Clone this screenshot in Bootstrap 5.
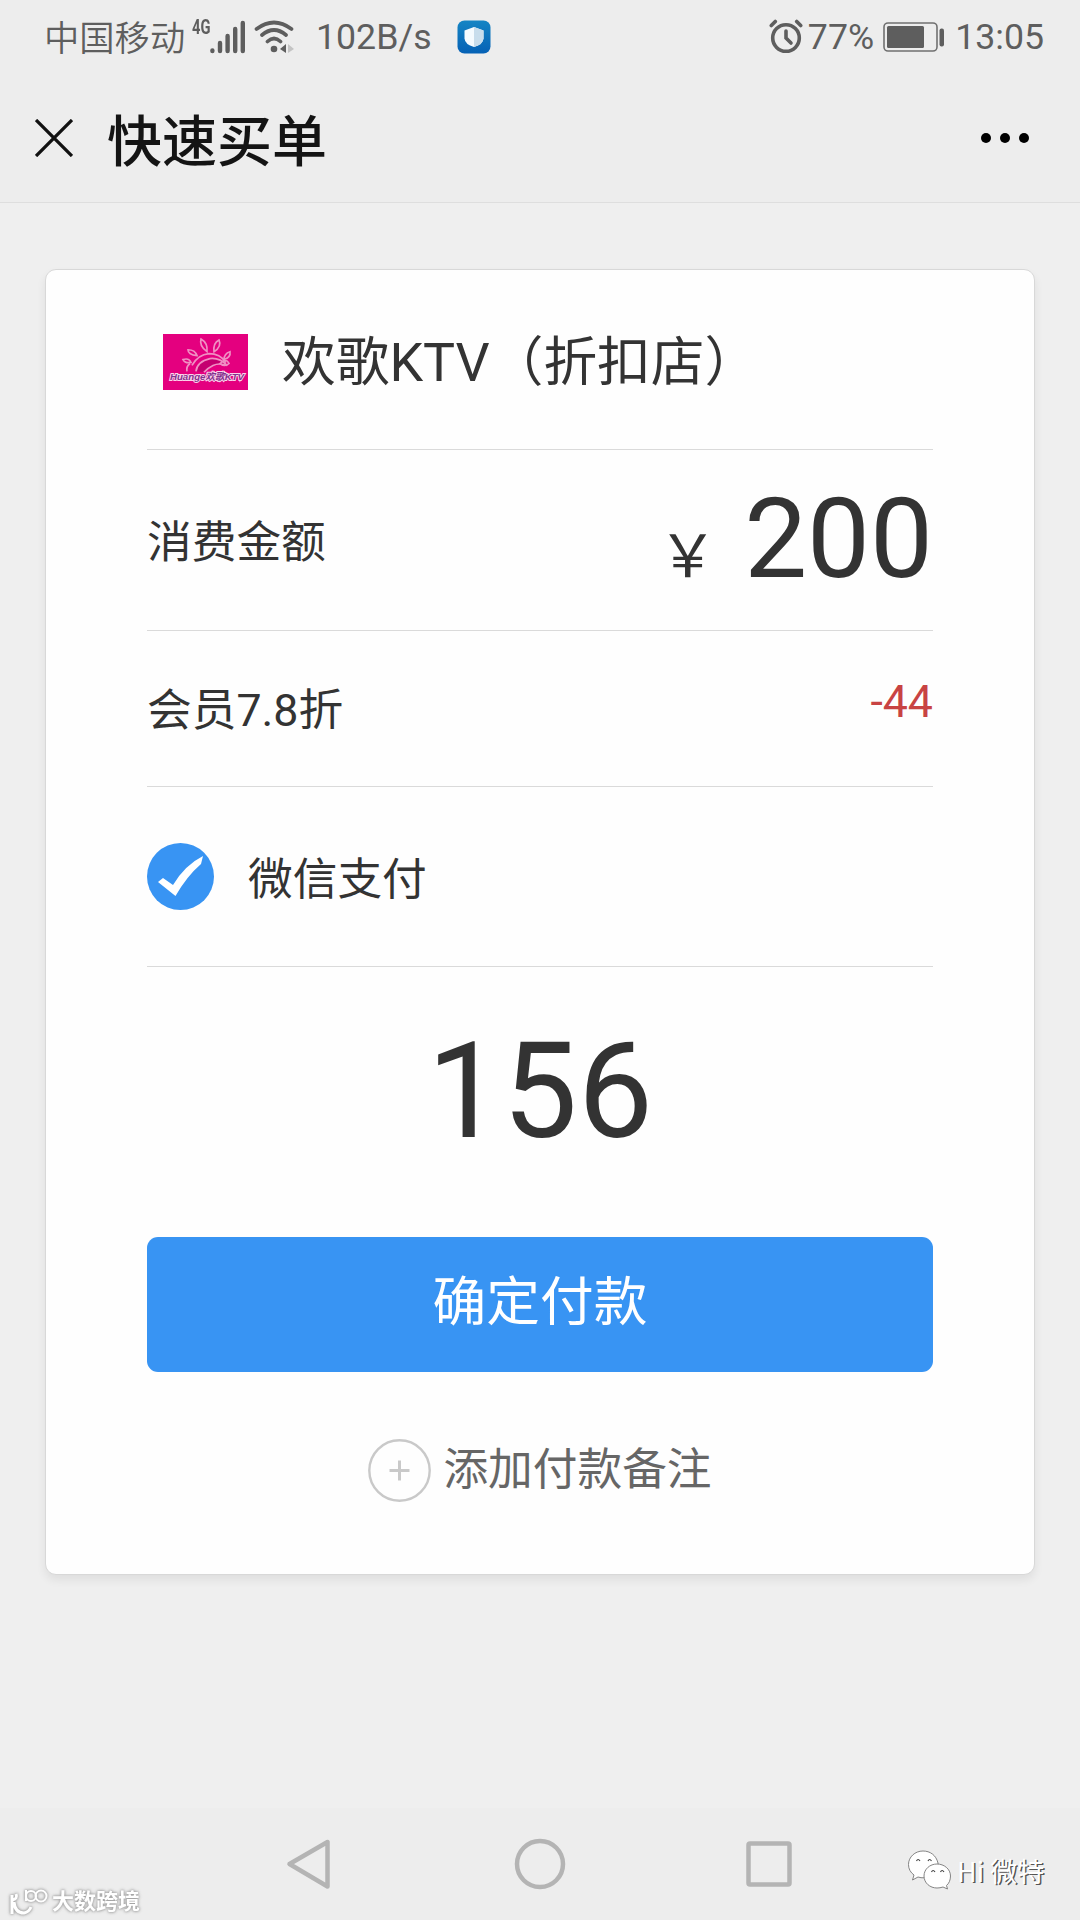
<!DOCTYPE html>
<html lang="zh-CN">
<head>
<meta charset="utf-8">
<meta name="viewport" content="width=device-width, initial-scale=1">
<title>快速买单</title>
<link href="https://cdn.jsdelivr.net/npm/bootstrap@5.3.0/dist/css/bootstrap.min.css" rel="stylesheet">
<style>
body{font-family:Roboto,"Noto Sans CJK SC",sans-serif;background:#efefef;color:#333;width:1080px;height:1920px;overflow:hidden;line-height:1}
svg{display:block;flex:none}
.status-bar{height:74px;padding:0 36px 0 44px;font-size:35.7px;color:#5e5e5e;background:#ededed}
.status-bar span{padding-top:2px}
.status-bar .carrier{width:148px;font-size:35.3px;padding-top:5px;font-weight:350}
.status-bar .net-4g{font-size:21px;font-weight:700;width:18px;transform:scaleX(.7);transform-origin:left;margin-top:-21px}
.title-bar{height:129px;padding:0 51px 0 35px;background:#ededed;border-bottom:1px solid #dedede}
.page-title{font-size:55px;font-weight:500;color:#141414;margin:0 0 2px 34px;line-height:60px;font-family:"Noto Sans CJK SC",sans-serif}
.pay-card{margin:66px 45px 0;height:1306px;border:1px solid #d8d8d8;border-radius:11px;padding:0 101px;box-shadow:0 5px 10px rgba(0,0,0,.07);--bs-card-bg:#fefefe}
.pay-row{border-bottom:1px solid #dadada;font-size:44.7px}
.pay-row .lbl{padding-top:7px}
.row-disc .lbl{margin-top:-2px}
.shop{height:180px;padding:4px 0 0 16px}
.pay-row .shop-name{font-size:53.7px;margin-left:34px;padding-top:3px}
.row-amount{height:181px}
.row-disc{height:156px}
.row-pay{height:180px}
.yen-sign{font-size:59px;font-family:"Noto Sans CJK SC",sans-serif;width:59px;margin-right:27px}
.sum{font-size:112px;margin-top:-2px}
.minus{color:#c84343;margin-top:-13px}
.total{height:270px;font-size:134px;padding-top:58px}
.btn-confirm{height:135px;font-size:53.7px;border:0;border-radius:11px;background:#3894f3;color:#fff;padding:0 0 3px;line-height:1}
.note-line{font-size:44.7px;color:#666;margin-top:67px}
.sys-nav{height:112px;background:#ededed}
.wm-left{position:absolute;left:9px;bottom:4px;color:#fff;font-size:22px;filter:drop-shadow(0 0 1.5px #999) drop-shadow(0 0 1px #bbb)}
.wm-right{position:absolute;left:907px;top:41px;color:#fff;font-size:27px;font-family:"Noto Sans CJK SC",sans-serif}
.wm-right span{text-shadow:1.5px 1px 0 #555}
</style>
<script src="https://cdn.jsdelivr.net/npm/bootstrap@5.3.0/dist/js/bootstrap.bundle.min.js"></script>
</head>
<body class="d-flex flex-column">
<div class="status-bar d-flex align-items-center justify-content-between">
  <div class="d-flex align-items-center">
    <span class="carrier text-nowrap">中国移动</span>
    <span class="net-4g">4G</span>
    <svg width="36" height="34" viewBox="0 0 36 34" stroke="#5e5e5e" stroke-width="4.4" stroke-linecap="round"><path d="M2.4 30.5v.5M10 23v8M17.6 16v15M25.2 9v22M32.800 3v28"/></svg>
    <svg class="ms-2" width="41" height="34" viewBox="0 0 41 34" fill="none" stroke="#5e5e5e" stroke-width="3.700" stroke-linecap="round"><path d="M2.500 9Q20 -4 37.500 9M8 15Q20 5 32 15M13.500 21.500Q20 15.500 26.500 21.500"/><circle cx="20" cy="29" r="3.300" fill="#5e5e5e" stroke="none"/><path d="M26 29l6-5v9z" fill="#5e5e5e" stroke="none"/><path d="M34 24l6 5-6 4z" fill="#c4c4c4" stroke="none"/></svg>
    <span style="margin-left:21px">102B/s</span>
    <svg style="margin-left:25px" width="34" height="34" viewBox="0 0 34 34"><defs><linearGradient id="shield-bg" x2="0" y2="1"><stop stop-color="#1585c4"/><stop offset="1" stop-color="#0561b5"/></linearGradient></defs><rect x=".5" y=".5" width="33" height="33" rx="7" fill="url(#shield-bg)"/><path d="M17 7l9.500 3.500v8q-.5 6-9.500 8.500-9-2.500-9.500-8.500v-8z" fill="#f5fbff"/><path d="M17 7l9.500 3.500v8q-.5 6-9.500 8.500z" fill="#c8ddec"/></svg>
  </div>
  <div class="d-flex align-items-center">
    <svg width="34" height="35" viewBox="0 0 34 35" fill="none" stroke="#5e5e5e" stroke-linecap="round"><circle cx="17" cy="19" r="13.300" stroke-width="3.600"/><path d="M17 12v7l5 5" stroke-width="3.600"/><path d="M2.300 6.500l4-4M31.700 6.500l-4-4" stroke-width="3.600"/></svg>
    <span style="margin-left:5px">77%</span>
    <svg style="margin-left:9px" width="62" height="30" viewBox="0 0 62 30"><rect x="1" y="1" width="53" height="28" rx="4" fill="none" stroke="#707070" stroke-width="1.600"/><rect x="4" y="4" width="37" height="22" rx="1.500" fill="#5e5e5e"/><rect x="56.500" y="6.500" width="4.500" height="18" rx="2" fill="#5e5e5e"/></svg>
    <span style="margin-left:10px">13:05</span>
  </div>
</div>
<header class="title-bar d-flex align-items-center">
  <svg width="38" height="38" viewBox="0 0 38 38" stroke="#111" stroke-width="3.300"><path d="M1 1l36 36M37 1L1 37"/></svg>
  <h1 class="page-title">快速买单</h1>
  <svg class="ms-auto" width="48" height="12" viewBox="0 0 48 12"><circle cx="5" cy="6" r="5"/><circle cx="24" cy="6" r="5"/><circle cx="43" cy="6" r="5"/></svg>
</header>
<main class="flex-grow-1">
  <section class="card pay-card">
    <div class="pay-row shop d-flex align-items-center">
      <svg width="85" height="56" viewBox="0 0 85 57" preserveAspectRatio="none"><rect width="85" height="57" fill="#e4007f"/><g fill="none" stroke="#f08fc3" stroke-width="1.700"><path d="M24 38q-1-5 3-8"/><path d="M33 38q1-10 14-13 10-1 17 7-8-3-14 0-6 3-9 7" fill="#c40070"/><path d="M29 32q6-11 17-12 11 0 17 9"/><path d="M44 18q-8-6-6-13 7 4 6 13zM51 18q-1-9 5-12 3 7-5 12zM34 22q-9-1-9-6 7 0 9 6zM61 26q0-6 6-8 1 6-6 8zM28 29q-6 1-8-3 6-2 8 3zM57 30q6-6 9 0-4 4-9 0z"/></g><text x="7" y="47" font-family="Liberation Sans,Noto Sans CJK SC,sans-serif" font-size="10" font-style="italic" font-weight="700" fill="#84308e" stroke="#fbd3e9" stroke-width="2" paint-order="stroke" textLength="74" lengthAdjust="spacingAndGlyphs">Huange欢歌KTV</text></svg>
      <span class="shop-name text-nowrap">欢歌KTV（折扣店）</span>
    </div>
    <div class="pay-row row-amount d-flex align-items-center justify-content-between">
      <span class="lbl">消费金额</span>
      <span class="d-flex align-items-baseline"><span class="yen-sign">￥</span><span class="sum">200</span></span>
    </div>
    <div class="pay-row row-disc d-flex align-items-center justify-content-between">
      <span class="lbl">会员7.8折</span><span class="minus">-44</span>
    </div>
    <div class="pay-row row-pay d-flex align-items-center">
      <svg width="67" height="67" viewBox="0 0 67 67"><circle cx="33.500" cy="33.500" r="33.500" fill="#3894f3"/><path d="M11 39l5-4 10 7Q38 22 56 13l-2 8Q40 33 28.500 53z" fill="#fff"/></svg>
      <span class="lbl" style="margin-left:34px">微信支付</span>
    </div>
    <div class="total text-center">156</div>
    <button type="button" class="btn btn-primary btn-confirm w-100">确定付款</button>
    <div class="note-line d-flex align-items-center justify-content-center">
      <svg width="63" height="63" viewBox="0 0 63 63" fill="none" stroke="#c9c9c9"><circle cx="31.500" cy="31.500" r="30.200" stroke-width="2.400"/><path d="M31.500 21.500v20M21.500 31.500h20" stroke-width="3"/></svg>
      <span style="margin-left:12px">添加付款备注</span>
    </div>
  </section>
</main>
<footer class="sys-nav position-relative">
  <svg width="1080" height="112" viewBox="0 0 1080 112" fill="none" stroke="#b4b4b4" stroke-width="4.500" stroke-linejoin="round"><path d="M289.500 56L327.500 34V78.500z"/><circle cx="540" cy="56" r="23"/><rect x="748.500" y="35.500" width="41" height="41" rx="1.500"/></svg>
  <div class="wm-left d-flex align-items-center">
    <svg width="39" height="28" viewBox="0 0 39 28" fill="none" stroke="#fff" stroke-width="3"><path d="M3 7v19M3 12q6-1 4-6M5 14q1 11 10 11 5-1 7-6"/><circle cx="22" cy="8" r="5" stroke-width="2"/><circle cx="32" cy="8" r="5.500" stroke-width="2"/><path d="M17 2v11" stroke-width="2"/></svg>
    <span class="fw-bold" style="margin-left:4px">大数跨境</span>
  </div>
  <div class="wm-right d-flex align-items-center">
    <svg width="44" height="42" viewBox="0 0 44 42" fill="#fff" stroke="#777" stroke-width=".9"><path d="M16 2C8 2 1.500 8 1.500 15.500c0 4.500 2 8 5.500 10.500l-1.500 5 5.500-3q3 1 6 .8C29 28 32 22 31 14 29 6 23 2 16 2z"/><path d="M30 15c-7 0-13 5-13 12s6 12 13 12q3 0 6-1l4.500 2-1-3.500c2.500-2 4-5.500 4-9.500C43.500 20 37 15 30 15z"/><path d="M9.500 12q1.500-3 3.500 0M21 12q1.500-3 3.500 0M24.500 23q1.500-3 3.500 0M33.500 23q1.500-3 3.500 0" fill="none" stroke="#444" stroke-width="1.200"/></svg>
    <span class="text-nowrap" style="margin-left:6px">Hi 微特</span>
  </div>
</footer>
</body>
</html>
